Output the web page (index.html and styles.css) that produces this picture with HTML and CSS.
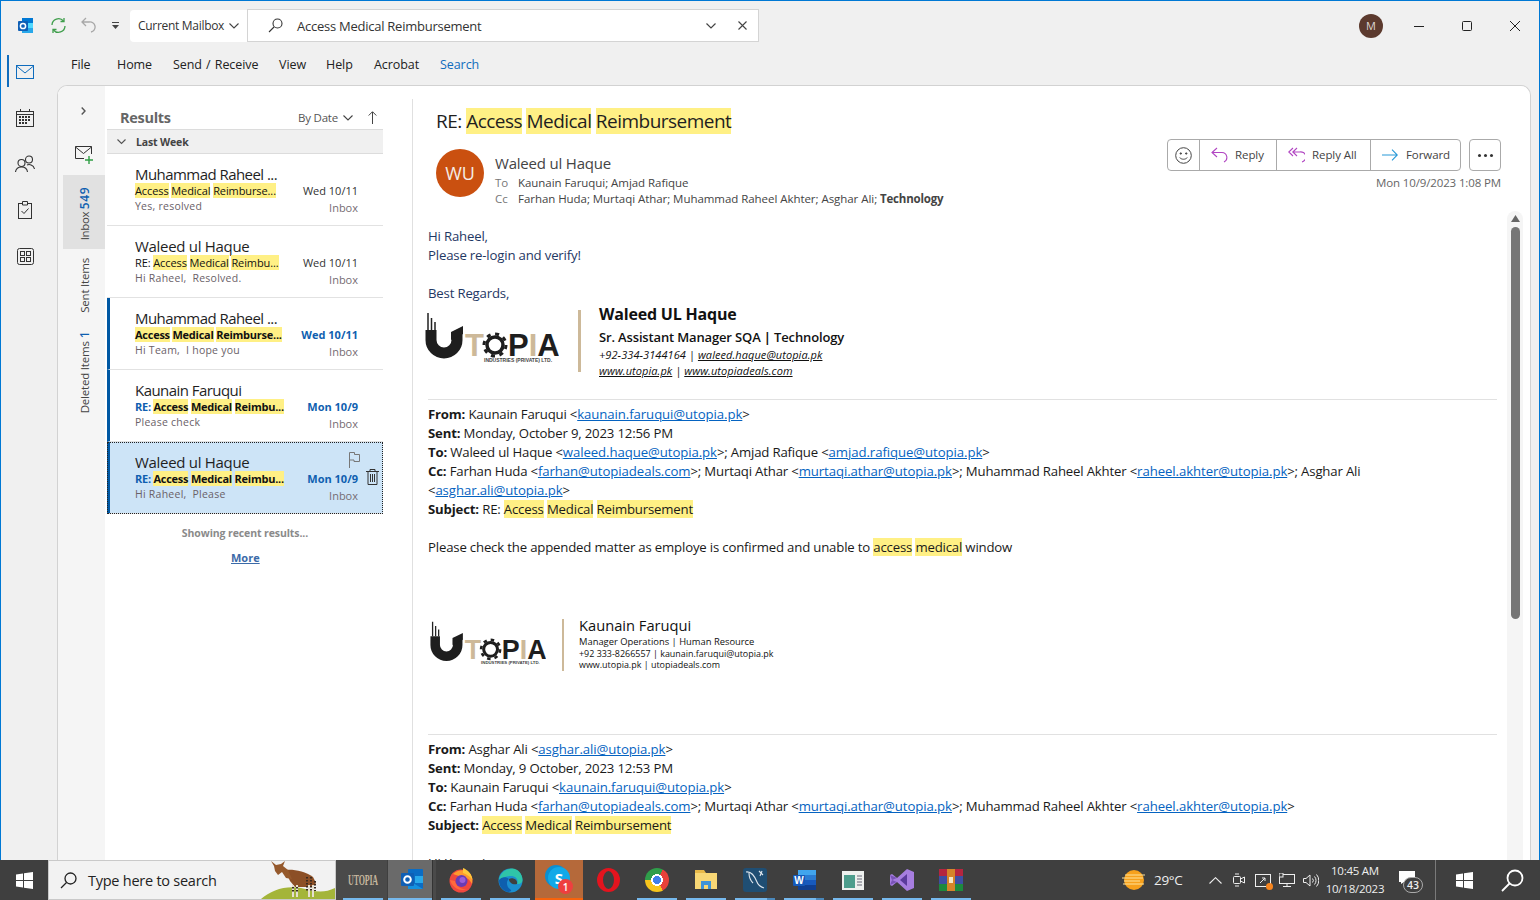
FILE: index.html
```html
<!DOCTYPE html>
<html lang="en">
<head>
<meta charset="utf-8">
<title>Outlook</title>
<link rel="stylesheet" href="styles.css">
</head>
<body>
<div class="window">
  <header class="titlebar">
    <svg class="qa-outlook" width="17" height="17" viewBox="0 0 17 17"><rect x="5" y="1" width="11" height="15" fill="#28a8ea"/><rect x="5" y="1" width="11" height="5" fill="#0078d4"/><rect x="10" y="6" width="6" height="5" fill="#50d9ff"/><rect x="1" y="4" width="10" height="10" rx="1" fill="#0f5fb5"/><circle cx="6" cy="9" r="2.600" fill="none" stroke="#fff" stroke-width="1.500"/></svg>
    <svg class="qa-sync" width="17" height="17" viewBox="0 0 17 17" fill="none" stroke="#3d9d4a" stroke-width="1.300"><path d="M2 8A6.500 6.500 0 0 1 13.500 4M15 9A6.500 6.500 0 0 1 3.500 13"/><path d="M14 1V4.500H10.500M3 16V12.500H6.500"/></svg>
    <svg class="qa-undo" width="16" height="17" viewBox="0 0 16 17" fill="none" stroke="#a8a8a8" stroke-width="1.300"><path d="M6 1L2 5L6 9M2 5H9A5 5 0 0 1 11 15"/></svg>
    <svg class="qa-more" width="9" height="8" viewBox="0 0 9 8" fill="#444"><rect x="1" y="0" width="7" height="1"/><path d="M1 3H8L4.500 7Z"/></svg>
    <div class="scope">Current Mailbox
      <svg width="10" height="6" viewBox="0 0 10 6" fill="none" stroke="#444" stroke-width="1.100"><path d="M.5 .5L5 5L9.500 .5"/></svg>
    </div>
    <div class="searchbox">
      <svg class="s-ico" width="15" height="15" viewBox="0 0 15 15" fill="none" stroke="#333" stroke-width="1.100"><circle cx="9.500" cy="5.500" r="4.500"/><path d="M6 9L1 14"/></svg>
      <span class="s-text">Access Medical Reimbursement</span>
      <svg class="s-chev" width="10" height="6" viewBox="0 0 10 6" fill="none" stroke="#444" stroke-width="1.200"><path d="M.5 .5L5 5L9.500 .5"/></svg>
      <svg class="s-x" width="9" height="9" viewBox="0 0 9 9" fill="none" stroke="#444" stroke-width="1.100"><path d="M.5 .5L8.500 8.500M8.500 .5L.5 8.500"/></svg>
    </div>
    <div class="avatar-m">M</div>
    <svg class="w-min" width="10" height="10" viewBox="0 0 10 10" stroke="#222"><path d="M0 5.500H10"/></svg>
    <svg class="w-max" width="10" height="10" viewBox="0 0 10 10" fill="none" stroke="#222"><rect x=".5" y=".5" width="9" height="9" rx="1"/></svg>
    <svg class="w-close" width="10" height="10" viewBox="0 0 10 10" stroke="#222"><path d="M0 0L10 10M10 0L0 10"/></svg>
  </header>

  <div class="main">
    <nav class="rail">
      <a class="rail-i is-on"><svg width="18" height="14" viewBox="0 0 18 14" fill="none" stroke="#0f6cbd" stroke-width="1"><rect x=".5" y=".5" width="17" height="13"/><path d="M.5 1L9 8L17.500 1"/></svg></a>
      <a class="rail-i"><svg width="18" height="18" viewBox="0 0 18 18" fill="none" stroke="#333"><rect x=".5" y="2.500" width="17" height="15"/><path d="M.5 5.500H17.500M4.500 0V3M13.500 0V3"/><path d="M3 8H15M3 11H15M3 14H12" stroke-dasharray="2 1" stroke-width="2"/></svg></a>
      <a class="rail-i"><svg width="20" height="18" viewBox="0 0 20 18" fill="none" stroke="#333" stroke-width="1.100"><circle cx="6.500" cy="8" r="3.500"/><path d="M.5 17C1 13 4 12 6.500 12S12 13 12.500 17"/><circle cx="14" cy="4.500" r="3.500"/><path d="M12 10C14 9 18.500 9.500 19.500 14"/></svg></a>
      <a class="rail-i"><svg width="14" height="18" viewBox="0 0 14 18" fill="none" stroke="#333"><rect x=".5" y="2.500" width="13" height="15"/><path d="M4.500 .5H9.500V4H4.500Z" fill="#f0f0f0"/><path d="M3.500 10L6 12.500L10.500 7.500"/></svg></a>
      <a class="rail-i"><svg width="17" height="17" viewBox="0 0 17 17" fill="none" stroke="#333"><rect x=".5" y=".5" width="16" height="16" rx="2"/><rect x="3.500" y="3.500" width="4" height="4"/><rect x="9.500" y="3.500" width="4" height="4"/><rect x="3.500" y="9.500" width="4" height="4"/><rect x="9.500" y="9.500" width="4" height="4"/></svg></a>
    </nav>

    <div class="workspace">
      <nav class="tabs">
        <a class="tab t-file">File</a><a class="tab t-home">Home</a><a class="tab t-send">Send / Receive</a><a class="tab t-view">View</a><a class="tab t-help">Help</a><a class="tab t-acro">Acrobat</a><a class="tab t-search">Search</a>
      </nav>

      <section class="card">
        <aside class="folders">
          <svg class="f-chev" width="5" height="8" viewBox="0 0 5 8" fill="none" stroke="#555" stroke-width="1.400"><path d="M.7 .5L4 4L.7 7.500"/></svg>
          <svg class="f-new" width="19" height="18" viewBox="0 0 19 18" fill="none" stroke="#333"><path d="M9 12.500H.5V.5H16.500V8M.5 1L8.500 7.500L16.500 1"/><path d="M14 10V18M10 14H18" stroke="#2f9e44" stroke-width="1.400"/></svg>
          <div class="f-tile"><span class="v-text v-inbox">Inbox <b class="count">549</b></span></div>
          <div class="f-sent"><span class="v-text">Sent Items</span></div>
          <div class="f-del"><span class="v-text">Deleted Items <b class="count">1</b></span></div>
        </aside>

        <div class="list">
          <div class="list-head"><span class="results">Results</span><span class="bydate">By Date
            <svg width="10" height="6" viewBox="0 0 10 6" fill="none" stroke="#444" stroke-width="1.100"><path d="M.5 .5L5 5L9.500 .5"/></svg></span>
            <svg class="sort-up" width="9" height="13" viewBox="0 0 9 13" fill="none" stroke="#444"><path d="M4.500 13V1M.7 4.500L4.500 .7L8.300 4.500"/></svg>
          </div>
          <div class="group"><svg width="9" height="6" viewBox="0 0 9 6" fill="none" stroke="#555" stroke-width="1.100"><path d="M.5 .5L4.500 4.500L8.500 .5"/></svg><b>Last Week</b></div>

          <article class="row">
            <div class="r-l"><div class="r-name long">Muhammad Raheel ...</div><div class="r-sub"><mark>Access</mark> <mark>Medical</mark> <mark>Reimburse...</mark></div><div class="r-pre">Yes, resolved</div></div>
            <div class="r-r"><div class="r-date">Wed 10/11</div><div class="r-box">Inbox</div></div>
          </article>
          <article class="row">
            <div class="r-l"><div class="r-name">Waleed ul Haque</div><div class="r-sub">RE: <mark>Access</mark> <mark>Medical</mark> <mark>Reimbu...</mark></div><div class="r-pre">Hi Raheel,&nbsp; Resolved.</div></div>
            <div class="r-r"><div class="r-date">Wed 10/11</div><div class="r-box">Inbox</div></div>
          </article>
          <article class="row unread">
            <div class="r-l"><div class="r-name long">Muhammad Raheel ...</div><div class="r-sub"><mark>Access</mark> <mark>Medical</mark> <mark>Reimburse...</mark></div><div class="r-pre">Hi Team,&nbsp; I hope you</div></div>
            <div class="r-r"><div class="r-date">Wed 10/11</div><div class="r-box">Inbox</div></div>
          </article>
          <article class="row unread">
            <div class="r-l"><div class="r-name long">Kaunain Faruqui</div><div class="r-sub">RE: <mark>Access</mark> <mark>Medical</mark> <mark>Reimbu...</mark></div><div class="r-pre">Please check</div></div>
            <div class="r-r"><div class="r-date">Mon 10/9</div><div class="r-box">Inbox</div></div>
          </article>
          <article class="row unread selected">
            <div class="r-l"><div class="r-name">Waleed ul Haque</div><div class="r-sub">RE: <mark>Access</mark> <mark>Medical</mark> <mark>Reimbu...</mark></div><div class="r-pre">Hi Raheel,&nbsp; Please</div></div>
            <div class="r-r"><div class="r-date">Mon 10/9</div><div class="r-box">Inbox</div></div>
            <svg class="r-flag" width="12" height="16" viewBox="0 0 12 16" fill="none" stroke="#777"><path d="M1.500 16V.5H6.500V2.500H11.500V9.500H6V8H1.500"/></svg>
            <svg class="r-trash" width="13" height="16" viewBox="0 0 13 16" fill="none" stroke="#333"><path d="M0 2.500H13M4 2.500V.5H9V2.500M2 2.500V15.500H11V2.500M4.500 5V13M6.500 5V13M8.500 5V13"/></svg>
          </article>

          <div class="showing">Showing recent results...</div>
          <a class="more">More</a>
        </div>

        <div class="reader">
          <div class="head">
            <h1 class="subject">RE: <mark>Access</mark> <mark>Medical</mark> <mark>Reimbursement</mark></h1>
            <div class="sender">
              <div class="avatar">WU</div>
              <div class="who">
                <div class="who-name">Waleed ul Haque</div>
                <div class="who-line"><span class="lab">To</span>Kaunain Faruqui; Amjad Rafique</div>
                <div class="who-line"><span class="lab">Cc</span>Farhan Huda; Murtaqi Athar; Muhammad Raheel Akhter; Asghar Ali; <b>Technology</b></div>
              </div>
              <div class="actions">
                <div class="btn-row">
                  <div class="btns">
                    <a class="btn b-emoji"><svg width="17" height="17" viewBox="0 0 17 17" fill="none" stroke="#444"><circle cx="8.500" cy="8.500" r="7.800"/><circle cx="5.800" cy="6.500" r=".7" fill="#444"/><circle cx="11.200" cy="6.500" r=".7" fill="#444"/><path d="M4.800 10.500C6 12.800 11 12.800 12.200 10.500"/></svg></a>
                    <a class="btn b-reply"><svg width="17" height="16" viewBox="0 0 17 16" fill="none" stroke="#b146c2" stroke-width="1.100"><path d="M6 1L1 5.500L6 10M1 5.500H11A5 5 0 0 1 13 15"/></svg><span>Reply</span></a>
                    <a class="btn b-all"><svg width="17" height="16" viewBox="0 0 17 16" fill="none" stroke="#b146c2" stroke-width="1.100"><path d="M5 1L.8 5L5 9M9 1L4.800 5L9 9M4.800 5H11.500A5 5 0 0 1 14 15"/></svg><span>Reply All</span></a>
                    <a class="btn b-fwd"><svg width="16" height="12" viewBox="0 0 16 12" fill="none" stroke="#2899d8" stroke-width="1.100"><path d="M0 6H15M10 .7L15.300 6L10 11.300"/></svg><span>Forward</span></a>
                  </div>
                  <a class="btn-more"><i></i><i></i><i></i></a>
                </div>
                <div class="stamp">Mon 10/9/2023 1:08 PM</div>
              </div>
            </div>
          </div>

          <div class="msg-wrap">
            <div class="msg">
              <p class="navy">Hi Raheel,<br>Please re-login and verify!</p>
              <p class="navy gap">Best Regards,</p>
              <div class="sig sig-a">
                <svg class="sig-logo" width="134" height="60" viewBox="0 0 134 60">
                  <path d="M3 3V20M6.500 8V20M10 12V20" stroke="#222" stroke-width="1.500" fill="none"/>
                  <path d="M6 20V30A13 13 0 0 0 32 30V24" stroke="#1e1e1e" stroke-width="11" fill="none"/>
                  <path d="M26 22L38 16V24L26 30Z" fill="#1e1e1e"/>
                  <text x="40" y="46" class="lg lg-tan">T</text>
                  <circle cx="70" cy="35" r="8" fill="none" stroke="#1e1e1e" stroke-width="3.500"/>
                  <circle cx="70" cy="35" r="11" fill="none" stroke="#1e1e1e" stroke-width="3" stroke-dasharray="4 4.600"/>
                  <text x="83" y="46" class="lg">P<tspan class="lg-tan">I</tspan>A</text>
                  <text x="59" y="52" class="lg-small">INDUSTRIES (PRIVATE) LTD.</text>
                </svg>
                <div class="sig-bar"></div>
                <div class="sig-text">
                  <div class="a1">Waleed UL Haque</div>
                  <div class="a2">Sr. Assistant Manager SQA <b>|</b> Technology</div>
                  <div class="a3">+92-334-3144164 | <u>waleed.haque@utopia.pk</u></div>
                  <div class="a3"><u>www.utopia.pk</u> | <u>www.utopiadeals.com</u></div>
                </div>
              </div>
              <hr class="sep s1">
              <p><b>From:</b> Kaunain Faruqui &lt;<a>kaunain.faruqui@utopia.pk</a>&gt;<br>
              <b>Sent:</b> Monday, October 9, 2023 12:56 PM<br>
              <b>To:</b> Waleed ul Haque &lt;<a>waleed.haque@utopia.pk</a>&gt;; Amjad Rafique &lt;<a>amjad.rafique@utopia.pk</a>&gt;<br>
              <b>Cc:</b> Farhan Huda &lt;<a>farhan@utopiadeals.com</a>&gt;; Murtaqi Athar &lt;<a>murtaqi.athar@utopia.pk</a>&gt;; Muhammad Raheel Akhter &lt;<a>raheel.akhter@utopia.pk</a>&gt;; Asghar Ali<br>&lt;<a>asghar.ali@utopia.pk</a>&gt;<br>
              <b>Subject:</b> RE: <mark>Access</mark> <mark>Medical</mark> <mark>Reimbursement</mark></p>
              <p class="gap">Please check the appended matter as employe is confirmed and unable to <mark>access</mark> <mark>medical</mark> window</p>
              <div class="sig sig-b">
                <svg class="sig-logo" width="116" height="52" viewBox="0 0 134 60">
                  <path d="M3 3V20M6.500 8V20M10 12V20" stroke="#222" stroke-width="1.500" fill="none"/>
                  <path d="M6 20V30A13 13 0 0 0 32 30V24" stroke="#1e1e1e" stroke-width="11" fill="none"/>
                  <path d="M26 22L38 16V24L26 30Z" fill="#1e1e1e"/>
                  <text x="40" y="46" class="lg lg-tan">T</text>
                  <circle cx="70" cy="35" r="8" fill="none" stroke="#1e1e1e" stroke-width="3.500"/>
                  <circle cx="70" cy="35" r="11" fill="none" stroke="#1e1e1e" stroke-width="3" stroke-dasharray="4 4.600"/>
                  <text x="83" y="46" class="lg">P<tspan class="lg-tan">I</tspan>A</text>
                  <text x="59" y="52" class="lg-small">INDUSTRIES (PRIVATE) LTD.</text>
                </svg>
                <div class="sig-bar"></div>
                <div class="sig-text">
                  <div class="b1">Kaunain Faruqui</div>
                  <div class="b2 b-strong">Manager Operations | Human Resource</div>
                  <div class="b2">+92 333-8266557 | kaunain.faruqui@utopia.pk</div>
                  <div class="b2">www.utopia.pk | utopiadeals.com</div>
                </div>
              </div>
              <hr class="sep s2">
              <p><b>From:</b> Asghar Ali &lt;<a>asghar.ali@utopia.pk</a>&gt;<br>
              <b>Sent:</b> Monday, 9 October, 2023 12:53 PM<br>
              <b>To:</b> Kaunain Faruqui &lt;<a>kaunain.faruqui@utopia.pk</a>&gt;<br>
              <b>Cc:</b> Farhan Huda &lt;<a>farhan@utopiadeals.com</a>&gt;; Murtaqi Athar &lt;<a>murtaqi.athar@utopia.pk</a>&gt;; Muhammad Raheel Akhter &lt;<a>raheel.akhter@utopia.pk</a>&gt;<br>
              <b>Subject:</b> <mark>Access</mark> <mark>Medical</mark> <mark>Reimbursement</mark></p>
              <p class="gap">Hi Kaunain,</p>
            </div>
            <div class="scroll"><svg width="9" height="7" viewBox="0 0 9 7" fill="#666"><path d="M4.500 0L9 7H0Z"/></svg><div class="thumb"></div></div>
          </div>
        </div>
      </section>
    </div>
  </div>
</div>

<footer class="taskbar">
  <div class="start"><svg width="17" height="17" viewBox="0 0 17 17" fill="#fff"><path d="M0 2.400L7 1.400V8H0ZM8 1.300L17 0V8H8ZM0 9H7V15.600L0 14.600ZM8 9H17V17L8 15.700Z"/></svg></div>
  <div class="tsearch">
    <svg width="17" height="17" viewBox="0 0 17 17" fill="none" stroke="#222" stroke-width="1.300"><circle cx="10.500" cy="6.500" r="5.500"/><path d="M6.500 10.500L1 16"/></svg>
    <span>Type here to search</span>
    <svg class="okapi" width="74" height="38" viewBox="0 0 74 38"><path d="M0 38C10 29 25 24 40 27C52 30 62 33 74 27V38Z" fill="#a4b53a"/><path d="M24 9C32 8 44 10 52 16L55 22L52 26H34L29 20Z" fill="#8c4f26"/><path d="M10 0L15 4L20 3L24 0L22 5L27 9L31 18L25 17L21 11L17 14L14 10L13 5Z" fill="#95592c"/><path d="M32 24V36M36 24V36M48 24V36M52 24V36" stroke="#e6dfd0" stroke-width="2"/><path d="M32 26V32M36 26V32M46 16V30M50 16V30M54 20V30" stroke="#3a2a20" stroke-width="2" stroke-dasharray="1.500 1.500"/></svg>
  </div>
  <div class="apps">
    <div class="app run dim"><span class="tiny-logo">UTOPIA</span></div>
    <div class="app run active"><svg width="24" height="24" viewBox="0 0 24 24"><rect x="8" y="1" width="15" height="20" rx="1" fill="#0a6cc4"/><rect x="15" y="8" width="8" height="7" fill="#28a8ea"/><path d="M8 12L23 21H8Z" fill="#1490df"/><rect x="1" y="5" width="13" height="13" rx="1" fill="#0f5fb5"/><circle cx="7.500" cy="11.500" r="3.300" fill="none" stroke="#fff" stroke-width="2"/></svg></div>
    <div class="app run"><svg width="24" height="25" viewBox="0 0 24 25"><circle cx="12" cy="13" r="11.500" fill="#f0483e"/><path d="M4 6C8 2 15 1 19 4C23 7 24 12 23 16C21 12 18 9 13 9Z" fill="#ff9a2e"/><path d="M14 0C19 2 23 6 23.500 12C21 8 17 6 14 5Z" fill="#ffc93a"/><path d="M1 12C3 19 10 24 18 21C12 22 7 18 6 13Z" fill="#ff6a3c"/><circle cx="12.500" cy="13" r="6" fill="#6a3bb5"/><circle cx="13.500" cy="12" r="3" fill="#9c5fd8"/></svg></div>
    <div class="app run"><svg width="25" height="25" viewBox="0 0 25 25"><circle cx="12.500" cy="12.500" r="12" fill="#1b8fd0"/><path d="M1 12C2 4 9 .5 14 .5C20 .5 24.500 6 24.500 12C24.500 15 22 16.500 19 16C21 12 18 8 13 8C8 8 4 10 1 12Z" fill="#2fc4a8"/><path d="M1 12C3 9 8 8 11 11C8 13 8 19 13 22C14 24 10 24.500 8 23.500C3 21 1 17 1 12Z" fill="#0e5fae"/><path d="M11 11C14 9 20 11 19 16C15 17 11 15 11 11Z" fill="#3f3f3f"/></svg></div>
    <div class="app skype"><div class="ic-sk">S</div><b class="sk-badge">1</b></div>
    <div class="app"><div class="ic-opera"></div></div>
    <div class="app run"><div class="ic-chrome"></div></div>
    <div class="app run"><svg width="24" height="22" viewBox="0 0 24 22"><path d="M1 1H10L12 4H23V20H1Z" fill="#e8b949"/><rect x="1" y="4" width="22" height="16" fill="#f8d775"/><path d="M7 20V12H17V20H14V16H10V20Z" fill="#3d93d8"/></svg></div>
    <div class="app run double"><svg width="24" height="24" viewBox="0 0 24 24"><rect width="24" height="24" rx="3" fill="#1f4e73"/><path d="M3 4C9 3 12 9 14 14C15 17 18 19 21 20M6 5C6 10 8 13 10 15M16 3L20 7M19 3L17 8" fill="none" stroke="#dfe7ee" stroke-width="1.100"/></svg></div>
    <div class="app run double"><svg width="25" height="22" viewBox="0 0 25 22"><rect x="6" y="1" width="18" height="20" rx="1" fill="#2b7cd3"/><rect x="6" y="1" width="18" height="5" fill="#41a5ee"/><rect x="6" y="11" width="18" height="5" fill="#185abd"/><rect x="6" y="16" width="18" height="5" fill="#103f91"/><rect x="1" y="6" width="12" height="11" rx="1" fill="#1558b8"/><text x="7" y="15" class="ic-w">W</text></svg></div>
    <div class="app run"><svg width="22" height="19" viewBox="0 0 22 19"><rect width="22" height="19" fill="#eef0ee"/><rect x="2" y="4" width="11" height="13" fill="#4d9d8c"/><path d="M15 5H20M15 8H20M15 11H20M15 14H20" stroke="#667" stroke-width="1"/></svg></div>
    <div class="app run"><svg width="24" height="24" viewBox="0 0 24 24"><path d="M17 1L24 4V20L17 23L7 14L2 18L0 17V7L2 6L7 10Z" fill="#a77ee0"/><path d="M17 6V18L10 12Z" fill="#5b3b9c"/><path d="M0 7L7 10L2 12ZM0 17L7 14L2 12Z" fill="#7a54b8"/></svg></div>
    <div class="app run"><svg width="24" height="24" viewBox="0 0 24 24"><rect y="1" width="24" height="7" fill="#b5253f"/><rect y="8" width="24" height="8" fill="#3e4ea3"/><rect y="16" width="24" height="7" fill="#1c8a3e"/><rect x="8" y="1" width="8" height="22" fill="#d5842a"/><rect x="10" y="9" width="4" height="6" fill="#f5e7c6"/></svg></div>
  </div>
  <div class="tray">
    <svg class="t-sun" width="24" height="20" viewBox="0 0 24 20"><circle cx="12" cy="10" r="10" fill="#f7a11c"/><path d="M3 5H23M0 8H21M2 11H18M1 14H22" stroke="#ffe49a" stroke-width="1.200"/></svg>
    <span class="t-temp">29°C</span>
    <svg class="t-up" width="13" height="7" viewBox="0 0 13 7" fill="none" stroke="#eee" stroke-width="1.100"><path d="M.5 6.500L6.500 .7L12.500 6.500"/></svg>
    <svg class="t-meet" width="12" height="16" viewBox="0 0 12 16" fill="none" stroke="#eee"><rect x=".5" y="4.500" width="7" height="7" rx="1"/><path d="M7.500 7L11.500 5V11L7.500 9M2 2H6M2 14H6"/></svg>
    <div class="t-rdp"><svg width="16" height="15" viewBox="0 0 16 15" fill="none" stroke="#eee"><rect x=".5" y="1.500" width="15" height="12"/><path d="M5 10L10 5M7 5H10V8"/></svg><i></i></div>
    <svg class="t-net" width="16" height="14" viewBox="0 0 16 14" fill="none" stroke="#eee"><rect x=".5" y="1.500" width="15" height="9"/><rect x="0" y="0" width="4" height="4" fill="#404040"/><path d="M8 10.500V13M4 13.500H12"/></svg>
    <svg class="t-vol" width="16" height="13" viewBox="0 0 16 13" fill="none" stroke="#eee"><path d="M.5 4.500H3L7 1V12L3 8.500H.5ZM9.500 4.500A3 3 0 0 1 9.500 8.500M11.500 2.500A6 6 0 0 1 11.500 10.500M13.500 .5A9 9 0 0 1 13.500 12.500"/></svg>
    <div class="clock">10:45 AM<br>10/18/2023</div>
    <div class="notif"><svg width="16" height="13" viewBox="0 0 16 13" fill="#fff"><path d="M0 0H16V11H5L2 13V11H0Z"/></svg><b class="n-num">43</b></div>
    <div class="t-div"></div>
    <svg class="t-win" width="17" height="17" viewBox="0 0 17 17" fill="#fff"><path d="M0 2.400L7 1.400V8H0ZM8 1.300L17 0V8H8ZM0 9H7V15.600L0 14.600ZM8 9H17V17L8 15.700Z"/></svg>
    <svg class="t-mag" width="23" height="23" viewBox="0 0 23 23" fill="none" stroke="#fff" stroke-width="1.800"><circle cx="14" cy="9" r="7.500"/><path d="M8.500 14.500L1 22"/></svg>
  </div>
</footer>
</body>
</html>
```

FILE: styles.css
```css
* { box-sizing: border-box; }
html, body { margin: 0; height: 100%; overflow: hidden; }
body { width: 1540px; height: 900px; font-family: "Open Sans", "Noto Sans", sans-serif; color: #222; background: #f0f0f0; display: flex; flex-direction: column; }
mark { background: #fff085; color: inherit; }
a { color: inherit; text-decoration: none; }

.window { height: 860px; flex: none; border: 1px solid #0078d4; border-width: 1px 1px 0 1px; display: flex; flex-direction: column; background: #f0f0f0; overflow: hidden; }

/* Title bar */
.titlebar { height: 43px; flex: none; display: flex; align-items: center; padding: 6px 0 0 16px; }
.qa-sync { margin-left: 16px; }
.qa-undo { margin-left: 13px; }
.qa-more { margin-left: 15px; }
.scope { width: 117px; height: 32px; margin-left: 10px; background: #fff; border-radius: 4px 0 0 4px; display: flex; align-items: center; padding-left: 8px; gap: 5px; font-size: 12px; letter-spacing: -.3px; color: #333; white-space: nowrap; }
.searchbox { width: 512px; height: 33px; background: #fff; border: 1px solid #d4d4d4; display: flex; align-items: center; font-size: 13px; letter-spacing: -.25px; color: #333; }
.s-ico { margin-left: 20px; }
.s-text { margin-left: 14px; flex: 1; }
.s-x { margin: 0 11px 0 22px; }
.avatar-m { width: 24px; height: 24px; margin-left: 600px; border-radius: 50%; background: #5c3a2e; color: #dcd6d0; font-size: 11px; display: flex; align-items: center; justify-content: center; }
.w-min { margin-left: 31px; }
.w-max { margin-left: 38px; }
.w-close { margin-left: 38px; }

.main { flex: 1; display: flex; min-height: 0; }

/* Rail */
.rail { width: 56px; flex: none; padding-top: 5px; display: flex; flex-direction: column; padding-left: 6px; }
.rail-i { width: 32px; height: 46px; display: flex; align-items: center; justify-content: center; margin-left: 2px; position: relative; }
.is-on::before { content: ""; position: absolute; left: -2px; top: 6px; width: 2px; height: 32px; background: #0f6cbd; }

/* Tabs */
.workspace { flex: 1; min-width: 0; display: flex; flex-direction: column; padding-right: 8px; }
.tabs { height: 41px; flex: none; display: flex; align-items: flex-start; padding-top: 11px; font-size: 12.500px; letter-spacing: -.07px; word-spacing: 1px; color: #222; }
.tab { white-space: nowrap; line-height: 20px; }
.t-file { margin-left: 14px; width: 46px; }
.t-home { width: 56px; }
.t-send { width: 106px; }
.t-view { width: 47px; }
.t-help { width: 48px; }
.t-acro { width: 66px; }
.t-search { color: #0f6cbd; }

/* Card */
.card { flex: 1; min-height: 0; background: #fff; border: 1px solid #d2d2d2; border-bottom: 0; border-radius: 10px 10px 0 0; display: flex; overflow: hidden; }

.folders { width: 47px; flex: none; background: #f5f5f5; display: flex; flex-direction: column; align-items: center; position: relative; }
.f-chev { margin-top: 21px; margin-left: 3px; }
.f-new { margin-top: 31px; margin-left: 5px; }
.v-text { writing-mode: vertical-rl; transform: rotate(180deg); font-size: 11.500px; letter-spacing: -.2px; color: #444; white-space: nowrap; }
.v-inbox { letter-spacing: -.4px; }
.count { color: #0f5fb0; font-weight: 600; font-size: 12px; letter-spacing: .6px; margin-left: 7px; }
.v-inbox .count { margin-left: 3px; }
.f-tile { width: 42px; height: 74px; margin-top: 11px; margin-left: 5px; background: #e1e1e1; display: flex; align-items: center; justify-content: center; padding-top: 4px; }
.f-sent { height: 54px; margin-top: 9px; margin-left: 5px; }
.f-del { height: 86px; margin-top: 17px; margin-left: 5px; }
.f-sent, .f-del { display: flex; align-items: center; justify-content: center; }

/* List */
.list { width: 308px; flex: none; padding: 0 29px 0 2px; border-right: 1px solid #e0e0e0; margin-top: 13px; }
.list-head { height: 30px; display: flex; align-items: flex-end; padding: 0 7px 1px 13px; }
.results { font-size: 14.500px; font-weight: 700; color: #666; line-height: 20px; flex: 1; letter-spacing: -.3px; }
.bydate { font-size: 11.500px; letter-spacing: -.2px; color: #555; line-height: 20px; display: flex; align-items: center; gap: 5px; margin-right: 1px; }
.sort-up { margin: 0 -1px 4px 14px; }
.group { height: 25px; background: #f0f0f0; border-top: 1px solid #dcdcdc; border-bottom: 1px solid #dcdcdc; display: flex; align-items: center; padding-left: 10px; gap: 10px; font-size: 10.500px; color: #444; }
.group b { font-weight: 700; letter-spacing: -.15px; }

.row { height: 72px; border-bottom: 1px solid #e2e2e2; padding: 11px 25px 0 28px; display: flex; justify-content: space-between; position: relative; }
.unread { border-left: 3px solid #0058a3; padding-left: 25px; }
.r-name { font-size: 15px; letter-spacing: -.3px; line-height: 19px; color: #1f1f1f; white-space: nowrap; }
.r-name.long { letter-spacing: -.55px; }
.r-sub { font-size: 11px; line-height: 14px; color: #111; white-space: nowrap; letter-spacing: -.1px; }
.r-pre { font-size: 10.500px; letter-spacing: .25px; line-height: 14px; margin-top: 1px; color: #6a6168; white-space: nowrap; }
.r-r { text-align: right; padding-top: 19px; }
.r-date { font-size: 11px; line-height: 14px; color: #333; white-space: nowrap; }
.r-box { font-size: 11px; line-height: 14px; margin-top: 3px; color: #756c73; }
.unread .r-sub, .unread .r-date { font-weight: 700; }
.unread .r-sub { color: #0f5fb0; letter-spacing: -.25px; }
.unread .r-date { color: #0f5fb0; letter-spacing: 0; }
.unread .r-sub mark { color: #111; }
.selected { background: #cde4f7; outline: 1px dotted #222; outline-offset: -1px; }
.r-flag { position: absolute; right: 23px; top: 10px; }
.r-trash { position: absolute; right: 4px; top: 27px; }

.showing { text-align: center; margin-top: 11px; font-size: 10.500px; font-weight: 700; color: #8a8a8a; line-height: 16px; letter-spacing: -.1px; }
.more { display: block; width: 28px; margin: 9px auto 0; font-size: 11px; font-weight: 700; text-decoration: underline; color: #3b6aa8; line-height: 16px; }

/* Reader */
.reader { flex: 1; min-width: 0; display: flex; flex-direction: column; }
.head { flex: none; padding: 20px 29px 0 23px; }
.subject { margin: 0; font-size: 19px; font-weight: 400; line-height: 30px; letter-spacing: -.52px; color: #1f1f1f; white-space: nowrap; }
.sender { display: flex; margin-top: 3px; height: 78px; }
.avatar { width: 48px; height: 48px; margin-top: 10px; border-radius: 50%; background: #ca5010; color: #f5ece6; display: flex; align-items: center; justify-content: center; font-size: 18px; flex: none; }
.who { margin: 13px 0 0 11px; flex: 1; }
.who-name { font-size: 15px; letter-spacing: -.2px; line-height: 23px; color: #444; }
.who-line { font-size: 11.500px; letter-spacing: -.05px; line-height: 16px; color: #444; white-space: nowrap; }
.who-line b { font-weight: 700; letter-spacing: -.2px; }
.lab { display: inline-block; width: 23px; color: #777; }
.actions { display: flex; flex-direction: column; align-items: flex-end; }
.btn-row { display: flex; gap: 8px; }
.btns { height: 32px; display: flex; border: 1px solid #aaa; border-radius: 4px; font-size: 11.500px; letter-spacing: -.08px; color: #444; }
.btn { display: flex; align-items: center; height: 100%; white-space: nowrap; border-right: 1px solid #aaa; gap: 7px; }
.btn span { padding-bottom: 2px; }
.btn:last-child { border-right: 0; }
.b-emoji { width: 32px; justify-content: center; }
.b-reply { width: 77px; padding-left: 11px; }
.b-all { width: 94px; padding-left: 11px; gap: 7px; }
.b-fwd { width: 89px; padding-left: 11px; gap: 8px; }
.btn-more { width: 32px; height: 32px; border: 1px solid #aaa; border-radius: 4px; display: flex; align-items: center; justify-content: center; gap: 3px; }
.btn-more i { width: 3px; height: 3px; border-radius: 50%; background: #333; }
.stamp { font-size: 11.500px; letter-spacing: -.13px; color: #666; line-height: 16px; margin-top: 4px; white-space: nowrap; }

.msg-wrap { flex: 1; min-height: 0; display: flex; }
.msg { flex: 1; min-width: 0; padding: 10px 10px 0 15px; font-size: 13.200px; letter-spacing: -.18px; line-height: 18.900px; color: #1a1a1a; overflow: hidden; white-space: nowrap; }
.msg p { margin: 0; }
.msg a { color: #0563c1; text-decoration: underline; letter-spacing: -.08px; }
.msg b { font-weight: 700; }
.navy { color: #1f3864; }
.gap { margin-top: 19px !important; }
.sep { border: 0; border-top: 1px solid #e1e1e1; margin: 0; }
.s1 { margin: 16px 0 5.400px; }
.s2 { margin: 54.600px 0 5px; }

.sig { display: flex; color: #111; letter-spacing: 0; }
.sig-a { margin-top: 2px; height: 78px; }
.sig-a .sig-logo { margin: 5px 0 0 -3px; flex: none; }
.sig-a .sig-bar { width: 3px; height: 62px; margin: 5px 0 0 19px; background: #cdb999; }
.sig-a .sig-text { margin-left: 18px; }
.a1 { font-size: 16px; font-weight: 700; line-height: 20px; letter-spacing: -.2px; margin-top: -1px; }
.a2 { font-size: 13px; font-weight: 600; line-height: 19px; margin-top: 4px; letter-spacing: -.15px; }
.a3 { font-size: 11px; font-style: italic; line-height: 16px; letter-spacing: .07px; }
.sig-b { margin-top: 63px; height: 60px; }
.sig-b .sig-logo { margin: 0 0 0 2px; flex: none; }
.sig-b .sig-bar { width: 2px; height: 52px; margin: 0 0 0 16px; background: #cdb999; }
.sig-b .sig-text { margin-left: 15px; }
.b1 { font-size: 14.700px; font-weight: 500; line-height: 16px; margin-top: -2px; }
.b2 { font-size: 8.950px; font-weight: 500; line-height: 11.500px; }
.b1 + .b2 { margin-top: 3px; }
.b-strong { font-size: 9.400px; }

.lg { font: 700 31px "Liberation Sans", sans-serif; fill: #1e1e1e; }
.lg-tan { fill: #cdb999; }
.lg-small { font: 700 5px "Liberation Sans", sans-serif; fill: #444; }

.scroll { width: 16px; flex: none; margin: -6px 7px 0 0; background: #f5f5f5; border-radius: 8px 8px 0 0; display: flex; flex-direction: column; align-items: center; padding-top: 4px; }
.thumb { width: 9px; height: 392px; margin-top: 5px; border-radius: 5px; background: #767676; }

/* Taskbar */
.taskbar { height: 40px; flex: none; background: #3f3f3f; display: flex; position: relative; color: #eee; }
.start { width: 48px; display: flex; align-items: center; justify-content: center; }
.tsearch { width: 288px; height: 40px; background: #f2f2f2; border: 1px solid #c9c9c9; display: flex; align-items: center; padding-left: 11px; color: #222; font-size: 14.500px; letter-spacing: -.25px; position: relative; overflow: hidden; }
.tsearch span { margin-left: 11px; }
.okapi { position: absolute; right: 0; bottom: 0; }
.apps { display: flex; margin-left: 3px; gap: 1px; }
.app { width: 48px; height: 40px; display: flex; align-items: center; justify-content: center; position: relative; }
.run::after { content: ""; position: absolute; left: 4px; right: 4px; bottom: 0; height: 2px; background: #76b9ed; }
.dim { background: #4a4a4a; margin-left: -3px; width: 51px; padding-left: 3px; }
.dim::after { left: 7px; }
.active { background: linear-gradient(90deg, #6a6a6a 44px, #333 44px 45px, #4a4a4a 45px); }
.active::after { left: 0; }
.double::before { content: ""; position: absolute; right: 4px; bottom: 0; width: 8px; height: 2px; background: #4a88bb; z-index: 1; }
.skype { background: #b5693a; }
.skype::after { content: ""; position: absolute; left: 0; right: 0; bottom: 0; height: 2px; background: #f7630c; }
.tiny-logo { font: 700 8px "Liberation Serif", serif; color: #c4b59d; transform: scaleY(1.800); letter-spacing: -.2px; }
.ic-sk { width: 22px; height: 22px; margin: -4px 0 0 0; border-radius: 50%; background: #11a9e8; box-shadow: -3px -2px 0 #0d8fd0; color: #fff; font-size: 15px; font-weight: 700; display: flex; align-items: center; justify-content: center; }
.sk-badge { position: absolute; left: 23px; top: 19px; width: 15px; height: 15px; border-radius: 50%; background: #ee3f3f; color: #fff; font-size: 10px; font-weight: 600; display: flex; align-items: center; justify-content: center; }
.ic-opera { width: 23px; height: 24px; border-style: solid; border-color: #e3141e; border-width: 3px 6px; border-radius: 50%; }
.ic-chrome { width: 24px; height: 24px; border-radius: 50%; background: radial-gradient(circle, #3f7fe8 0 24%, #fff 25% 34%, transparent 35%), conic-gradient(from 30deg, #e8413a 0 120deg, #f7c51c 120deg 240deg, #2f9e4a 240deg 360deg); }
.ic-w { font: 700 10px "Liberation Sans", sans-serif; fill: #fff; text-anchor: middle; }
.tray { flex: 1; display: flex; align-items: center; position: relative; font-size: 12px; }
.t-sun { margin-left: 147px; }
.t-temp { margin-left: 8px; font-size: 13.500px; letter-spacing: -.3px; width: 29px; white-space: nowrap; }
.t-up { margin-left: 26px; }
.t-meet { margin-left: 11px; }
.t-rdp { position: relative; margin-left: 10px; display: flex; }
.t-rdp i { position: absolute; right: -2px; bottom: -2px; width: 7px; height: 7px; border-radius: 50%; background: #f7851e; }
.t-net { margin-left: 8px; }
.t-vol { margin-left: 8px; }
.clock { width: 62px; margin-left: 5px; text-align: center; font-size: 11.500px; letter-spacing: -.25px; line-height: 18px; color: #eee; white-space: nowrap; padding-bottom: 1px; }
.notif { position: relative; margin-left: 13px; width: 26px; height: 26px; padding-top: 4px; }
.notif svg { display: block; }
.n-num { position: absolute; left: 4px; top: 10px; width: 20px; height: 16px; border: 1px solid #aaa; border-radius: 8px; background: #3f3f3f; color: #eee; font-size: 10.500px; font-weight: 600; line-height: 14px; text-align: center; }
.t-div { width: 1px; height: 40px; margin-left: 10px; background: #7a7a7a; }
.t-win { margin-left: 20px; }
.t-mag { margin-left: 28px; }
```
